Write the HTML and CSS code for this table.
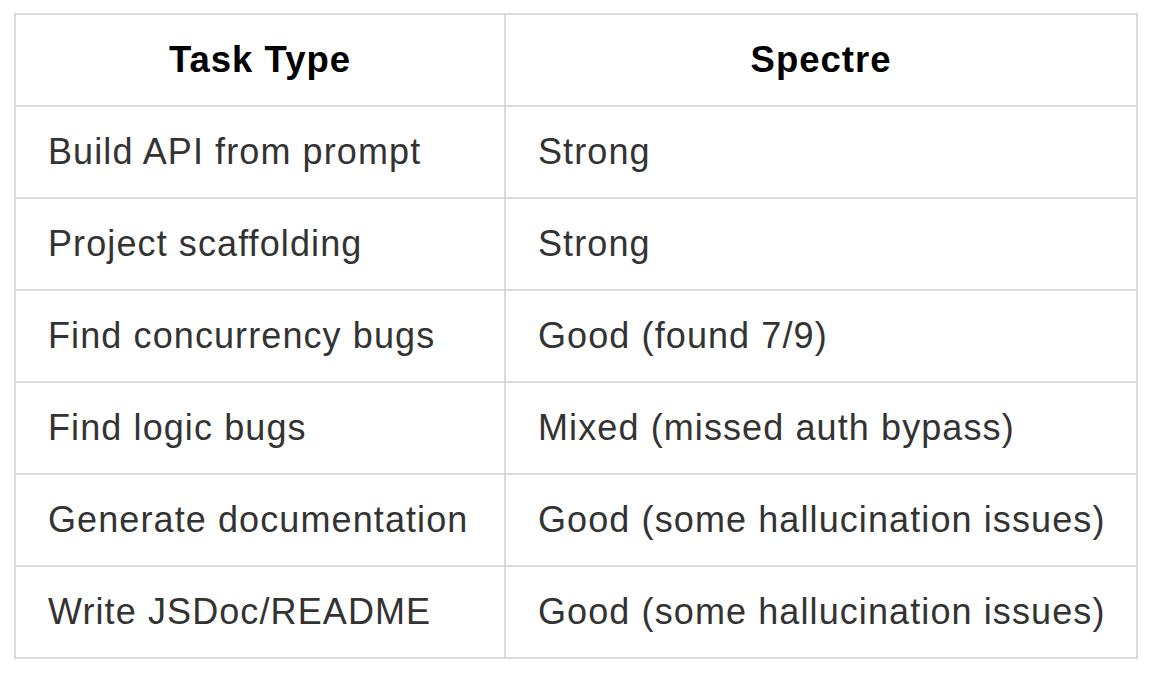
FILE: index.html
```html
<!DOCTYPE html>
<html>
<head>
<meta charset="utf-8">
<link rel="stylesheet" href="styles.css">
</head>
<body>
<div class="page">
<table class="grid">
  <colgroup><col class="c1"><col class="c2"></colgroup>
  <thead>
    <tr><th>Task Type</th><th>Spectre</th></tr>
  </thead>
  <tbody>
    <tr><td>Build API from prompt</td><td>Strong</td></tr>
    <tr><td>Project scaffolding</td><td>Strong</td></tr>
    <tr><td>Find concurrency bugs</td><td>Good (found 7/9)</td></tr>
    <tr><td>Find logic bugs</td><td>Mixed (missed auth bypass)</td></tr>
    <tr><td>Generate documentation</td><td>Good (some hallucination issues)</td></tr>
    <tr><td>Write JSDoc/README</td><td>Good (some hallucination issues)</td></tr>
  </tbody>
</table>
</div>
</body>
</html>
```
FILE: styles.css
```css
html, body {
  margin: 0;
  padding: 0;
  background: #ffffff;
}
.page {
  padding: 13px 0 0 14px;
}
.grid {
  border-collapse: collapse;
  width: 1122px;
  table-layout: fixed;
  font-family: "Liberation Sans", Arial, Helvetica, sans-serif;
  font-size: 36px;
  letter-spacing: 1.1px;
}
.c1 { width: 490px; }
.c2 { width: 632px; }
.grid th, .grid td {
  border: 2px solid #d9d9d9;
  height: 90px;
  padding: 0 0 0 32px;
  box-sizing: content-box;
  vertical-align: middle;
  line-height: 40px;
  white-space: nowrap;
}
.grid th {
  padding: 0;
  text-align: center;
  font-weight: bold;
  font-size: 36.5px;
  color: #000000;
  letter-spacing: 1px;
}
.grid td {
  color: #333333;
  text-align: left;
}
```
